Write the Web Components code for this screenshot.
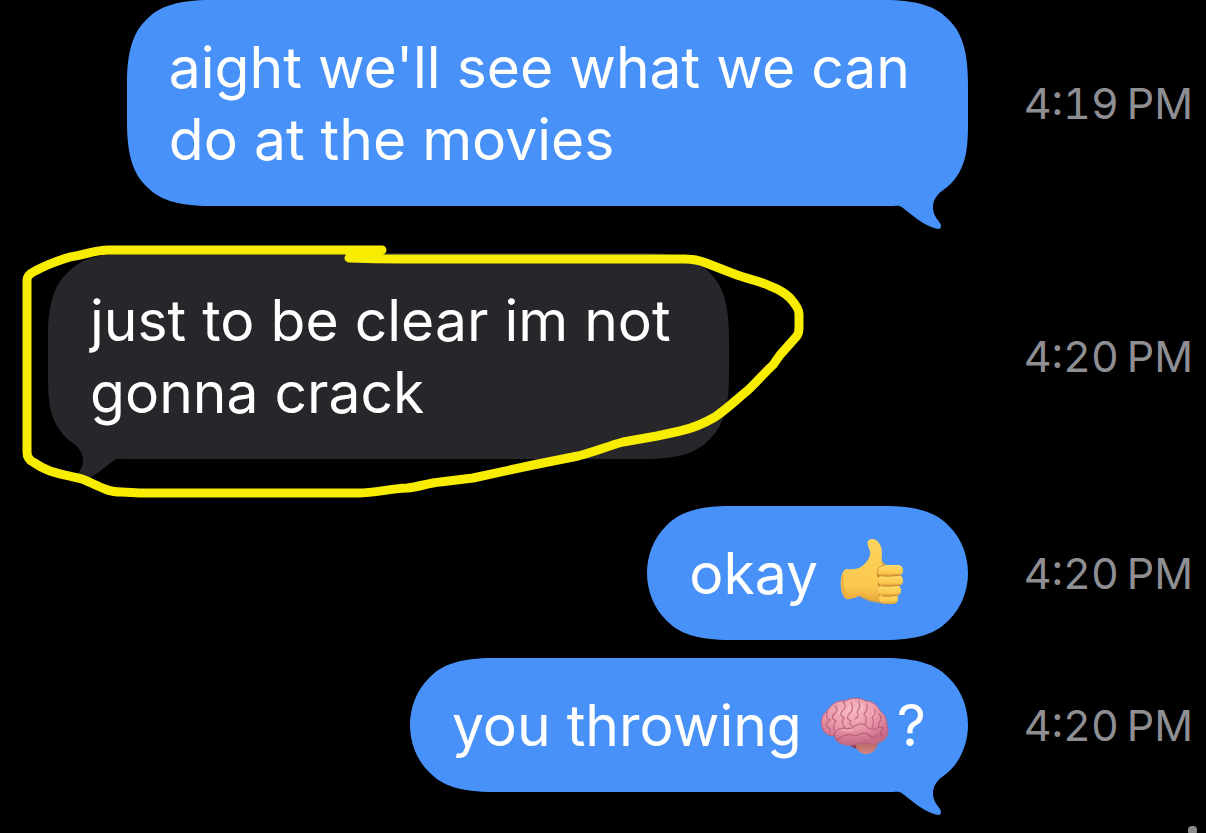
<!DOCTYPE html>
<html lang="en">
<head>
<meta charset="utf-8">
<meta name="viewport" content="width=device-width, initial-scale=1">
<title>Messages</title>
<style>
  body { margin: 0; background: #000; font-family: Inter, "Liberation Sans", sans-serif; }
</style>
</head>
<body>
<chat-thread>
  <chat-message time="4:19&#8239;PM" side="sent" tail class="apart">aight we'll see what we can&nbsp;<br>do at the movies</chat-message>
  <chat-message time="4:20&#8239;PM" side="received" tail class="apart">just to be clear im not&nbsp;<br>gonna crack<marker-ring slot="mark"></marker-ring></chat-message>
  <chat-message time="4:20&#8239;PM" side="sent">okay <emoji-thumb></emoji-thumb>&nbsp;</chat-message>
  <chat-message time="4:20&#8239;PM" side="sent" tail>you throwing <emoji-brain></emoji-brain>?</chat-message>
</chat-thread>

<template id="thread-template">
  <style>
    :host { display: block; position: relative; box-sizing: border-box; min-height: 100vh; padding-left: 48px; overflow: hidden; background: #000; }
    .list { display: flex; flex-direction: column; gap: 18px; }
    ::slotted(.apart) { margin-bottom: 29px; }
    .thumb { position: absolute; right: 9px; bottom: -2px; width: 9px; height: 9px; border-radius: 4px; background: #8a8a8c; }
  </style>
  <div class="list"><slot></slot></div>
  <div class="thumb"></div>
</template>

<template id="message-template">
  <style>
    :host { display: flex; align-items: center; }
    .lane { flex: 1; display: flex; min-width: 0; }
    :host([side="sent"]) .lane { justify-content: flex-end; }
    .bubble { position: relative; flex: none; padding: 32px 42px 30px; color: #fff; font-size: 57px; line-height: 72px; white-space: nowrap; --fill: #4891f8; }
    :host([side="received"]) .bubble { --fill: #27262b; }
    .shape { position: absolute; left: 0; top: 0; overflow: visible; }
    :host([side="received"]) .shape { transform: scaleX(-1); }
    .shape path { fill: var(--fill); }
    .text { position: relative; margin: 0; }
    time { flex: none; box-sizing: border-box; width: 238px; padding-right: 13px; text-align: right; color: #8e8e93; font-size: 43px; line-height: 56px; font-variant-numeric: tabular-nums; white-space: nowrap; }
  </style>
  <div class="lane">
    <div class="bubble">
      <svg class="shape" aria-hidden="true"><path></path></svg>
      <p class="text"><slot></slot></p>
      <slot name="mark"></slot>
    </div>
  </div>
  <time></time>
</template>

<template id="ring-template">
  <style>
    :host { position: absolute; left: -48px; top: -13px; width: 820px; height: 260px; pointer-events: none; }
    svg { display: block; overflow: visible; }
    path { fill: none; stroke: #f8ed00; stroke-width: 9; stroke-linecap: round; stroke-linejoin: round; }
  </style>
  <svg width="820" height="260" viewBox="0 240 820 260" aria-hidden="true">
    <path d="M382 250H108C95 250 85 255 70 257Q50 263 35 271Q27 275 27 280V452Q27 459 33 462Q40 467 50 471C62 475 72 476 82 479C90 482 97 486 105 489Q112 492 122 492L140 493H358C376 493 387 489 407 488C419 487 428 483 440 482L473 478L533 465L578 456C594 452 608 446 623 442L657 436L680 431Q698 427 715 417C728 408 737 399 747 391C756 383 764 373 773 365L780 355L796 337Q799 334 799 328V314Q799 308 790 298Q783 291 770 286C760 281 748 279 737 275L706 263Q696 259 685 259H400Q375 259 349 258"/>
  </svg>
</template>

<template id="thumb-template">
  <style>
    :host { display: inline-block; width: 70px; height: 68px; padding-left: 6px; vertical-align: -12px; }
    svg { display: block; }
  </style>
  <svg width="70" height="68" viewBox="0 0 70 68" role="img" aria-label="thumbs up">
    <defs>
      <linearGradient id="skin" x1="0" y1="0" x2="0" y2="1"><stop offset="0" stop-color="#fdd35b"/><stop offset=".75" stop-color="#fbc84f"/><stop offset="1" stop-color="#e5a435"/></linearGradient>
      <linearGradient id="finger" x1="0" y1="0" x2="0" y2="1"><stop offset="0" stop-color="#ffda68"/><stop offset=".7" stop-color="#fac94f"/><stop offset="1" stop-color="#dda038"/></linearGradient>
    </defs>
    <path fill="url(#skin)" d="M6 31Q13 32 19 30C26 26 31 20 30 13C28 8 26 4 29 2C34-1 39 3 41 9C43 15 41 19 42 24C44 28 50 29 54 32V62Q48 66 40 64C32 64 25 60 19 58Q12 62 6 61C-1 56-1 34 6 31Z"/>
    <path fill="none" stroke="#dea13b" stroke-width="2" opacity=".65" d="M3 37Q1 49 6 58M20 58Q32 65 42 64M42 23Q44 28 49 29"/>
    <path fill="#b76f20" opacity=".75" d="M38 31Q35 36 39 41Q36 46 40 51Q37 57 41 63L47 61V30Z"/>
    <g fill="url(#finger)">
      <rect x="39" y="55" width="19" height="11" rx="5"/>
      <rect x="38" y="47" width="23" height="11" rx="5"/>
      <rect x="38" y="37" width="25" height="11" rx="5"/>
      <rect x="37" y="27" width="26" height="11" rx="5"/>
    </g>
    <path fill="none" stroke="#bd7928" stroke-width="1" opacity=".75" d="M41 38Q51 39 60 37M41 48Q51 49 60 47M42 58Q50 59 57 57M38 34V31Q40 27 45 27"/>
  </svg>
</template>

<template id="brain-template">
  <style>
    :host { display: inline-block; width: 77px; height: 60px; padding-left: 2px; vertical-align: -11px; }
    svg { display: block; }
  </style>
  <svg width="70" height="60" viewBox="0 0 70 60" role="img" aria-label="brain">
    <defs>
      <radialGradient id="lobe" cx=".45" cy=".25" r=".7"><stop offset="0" stop-color="#f8b9c3"/><stop offset=".6" stop-color="#e995a8"/><stop offset="1" stop-color="#c86d88"/></radialGradient>
      <linearGradient id="stem" x1="0" y1="0" x2="0" y2="1"><stop offset="0" stop-color="#a85c5b"/><stop offset="1" stop-color="#d88480"/></linearGradient>
    </defs>
    <path fill="#8e3b59" d="M28 46Q34 54 43 51L46 45Z"/>
    <path fill="url(#stem)" d="M35 47Q37 56 45 57Q55 58 58 46L50 41Z"/>
    <path fill="url(#lobe)" stroke="#bd6380" stroke-width="1" d="M2 29C0 23 3 17 7 14C11 7 18 3 25 4C32 0 41 1 46 4C53 4 58 9 60 14C66 18 67 25 67 29C70 36 66 43 60 45C52 49 46 45 39 46C31 50 23 48 18 45Q14 42 15 38Q11 40 7 37Q2 34 2 29Z"/>
    <g fill="none" stroke="#a94d6b" stroke-width="1.2" stroke-linecap="round" opacity=".65">
      <path d="M14 39Q15 31 24 31Q30 33 35 29Q43 24 48 31Q53 34 59 30"/>
      <path d="M17 43Q27 35 36 39Q44 34 49 38Q55 43 58 38"/>
      <path d="M7 15Q5 22 10 23Q4 27 8 31Q11 31 10 36M15 9Q20 12 14 17Q10 21 16 24Q13 27 14 33"/>
      <path d="M23 5Q28 10 22 14Q19 18 24 21Q20 25 25 31M31 5Q35 12 29 17Q25 22 31 24Q27 27 33 29"/>
      <path d="M39 4Q41 10 37 15Q40 19 35 22M47 7Q48 13 44 17Q48 22 45 27M55 12Q56 16 52 20Q55 25 52 31"/>
      <path d="M59 17Q63 21 59 26Q57 30 63 31Q59 37 63 40"/>
    </g>
    <g fill="none" stroke="#ffd3d8" stroke-width="1" stroke-linecap="round" opacity=".65"><path d="M19 11Q22 14 18 17M29 9Q30 13 27 16M40 6Q44 8 42 14M22 33Q27 35 33 33M52 14Q55 18 51 19"/></g>
  </svg>
</template>

<script>
  const stamp = (host, id) => {
    const root = host.attachShadow({ mode: 'open' });
    root.append(document.getElementById(id).content.cloneNode(true));
    return root;
  };

  // Outline of a bubble with continuous corners and an optional tail at the lower right.
  function bubblePath(w, h, tail) {
    const m = 19.5, n = 32, o = 6.5, q = 50;
    const ex = Math.min(84, w / 2), ey = Math.min(84, h / 2);
    let p = `M${ex} 0H${w - ex}C${w - q} 0 ${w - n} ${o} ${w - m} ${m}C${w - o} ${n} ${w} ${q} ${w} ${ey}V${h - ey}`;
    if (tail) {
      p += `C${w} ${h - 57} ${w - 2} ${h - 46} ${w - 9} ${h - 33}C${w - 14} ${h - 25} ${w - 19} ${h - 20} ${w - 26} ${h - 15}`
        + `C${w - 37} ${h - 7} ${w - 37} ${h + 5} ${w - 31} ${h + 13}C${w - 28} ${h + 17} ${w - 27} ${h + 18} ${w - 27} ${h + 20}`
        + `C${w - 27} ${h + 24} ${w - 31} ${h + 23} ${w - 34} ${h + 22}C${w - 46} ${h + 18} ${w - 56} ${h + 9} ${w - 65} ${h + 2}`
        + `C${w - 69} ${h - 1} ${w - 71} ${h} ${w - 75} ${h}`;
    } else {
      p += `C${w} ${h - q} ${w - o} ${h - n} ${w - m} ${h - m}C${w - n} ${h - o} ${w - q} ${h} ${w - ex} ${h}`;
    }
    return p + `H${ex}C${q} ${h} ${n} ${h - o} ${m} ${h - m}C${o} ${h - n} 0 ${h - q} 0 ${h - ey}V${ey}`
      + `C0 ${q} ${o} ${n} ${m} ${m}C${n} ${o} ${q} 0 ${ex} 0Z`;
  }

  class ChatMessage extends HTMLElement {
    connectedCallback() {
      if (this.shadowRoot) return;
      const root = stamp(this, 'message-template');
      root.querySelector('time').textContent = this.getAttribute('time');
      this.bubble = root.querySelector('.bubble');
      this.shape = root.querySelector('.shape');
      new ResizeObserver(() => this.draw()).observe(this.bubble);
    }
    draw() {
      const w = this.bubble.offsetWidth, h = this.bubble.offsetHeight;
      this.shape.setAttribute('width', w);
      this.shape.setAttribute('height', h);
      this.shape.firstElementChild.setAttribute('d', bubblePath(w, h, this.hasAttribute('tail')));
    }
  }
  customElements.define('emoji-thumb', class extends HTMLElement { constructor() { super(); stamp(this, 'thumb-template'); } });
  customElements.define('emoji-brain', class extends HTMLElement { constructor() { super(); stamp(this, 'brain-template'); } });
  customElements.define('marker-ring', class extends HTMLElement { constructor() { super(); stamp(this, 'ring-template'); } });
  customElements.define('chat-message', ChatMessage);
  customElements.define('chat-thread', class extends HTMLElement { constructor() { super(); stamp(this, 'thread-template'); } });
</script>
</body>
</html>
